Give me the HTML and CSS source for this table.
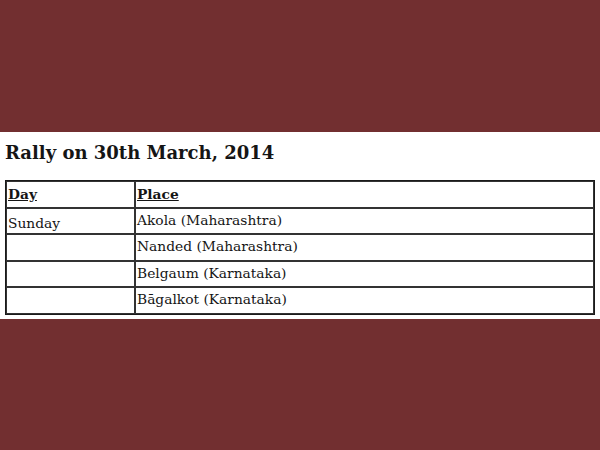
FILE: index.html
```html
<!DOCTYPE html>
<html>
<head>
<meta charset="utf-8">
<link rel="stylesheet" href="styles.css">
</head>
<body>
<div class="band">
  <h1 class="title">Rally on 30th March, 2014</h1>
  <table class="rally">
    <tr><th class="col-day">Day</th><th>Place</th></tr>
    <tr><td class="day">Sunday</td><td>Akola (Maharashtra)</td></tr>
    <tr><td></td><td>Nanded (Maharashtra)</td></tr>
    <tr><td></td><td>Belgaum (Karnataka)</td></tr>
    <tr><td></td><td>Bāgalkot (Karnataka)</td></tr>
  </table>
</div>
</body>
</html>
```
FILE: styles.css
```css
html, body {
  margin: 0;
  padding: 0;
  height: 100%;
  background: #722f30;
}
body {
  padding-top: 132px;
  box-sizing: border-box;
}
.band {
  background: #ffffff;
  height: 187px;
  box-sizing: border-box;
  padding: 9px 5px 0 5px;
  font-family: "DejaVu Serif", Georgia, serif;
  color: #151515;
}
.title {
  margin: 0;
  font-size: 18px;
  line-height: 24px;
  font-weight: bold;
}
.rally {
  margin-top: 15px;
  width: 590px;
  border-collapse: separate;
  border-spacing: 0;
  border: 1px solid #1a1a1a;
  font-size: 13.8px;
}
.rally th, .rally td {
  border: 1px solid #333;
  height: 26.6px;
  box-sizing: border-box;
  padding: 1px 1px 0 1px;
  text-align: left;
  vertical-align: top;
  line-height: 20px;
}
.rally th {
  text-decoration: underline;
  font-weight: bold;
  padding-top: 2px;
}
.rally td.day {
  padding-top: 4px;
}
.col-day {
  width: 129px;
}
```
